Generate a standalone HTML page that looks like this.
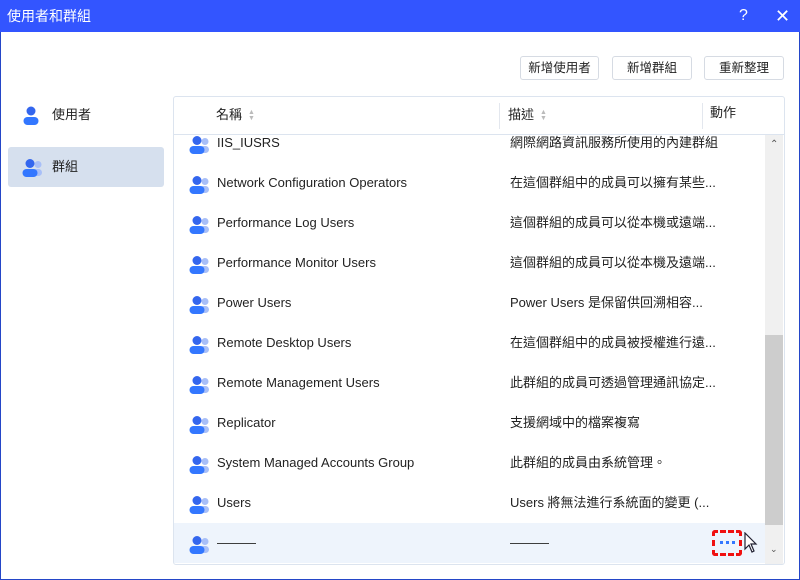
<!DOCTYPE html>
<html><head><meta charset="utf-8"><style>
*{margin:0;padding:0;box-sizing:border-box}
body{width:800px;height:580px;overflow:hidden;background:#fff;font-family:"Liberation Sans","Noto Sans CJK TC",sans-serif;font-size:13px;color:#222;position:relative}
.win{position:absolute;left:0;top:0;width:800px;height:580px;border:1px solid #2446c8;border-top:none}
.title{position:absolute;left:0;top:0;width:800px;height:32px;background:#3355ff;color:#fff;font-size:14px;line-height:32px;padding-left:7px}
.title .q{position:absolute;left:739px;top:0;font-size:16px}
.title .x{position:absolute;left:775px;top:0;font-size:18px}
.btn{position:absolute;top:56px;height:24px;border:1px solid #d6dbe3;border-radius:3px;background:#fff;text-align:center;line-height:22px;font-size:12.5px;white-space:nowrap}
.side{position:absolute;left:8px;width:156px;height:40px;border-radius:3px;line-height:40px;padding-left:44px;font-size:13px}
.side svg{position:absolute;left:14px;top:11px}
.panel{position:absolute;left:173px;top:96px;width:612px;height:469px;border:1px solid #dce4ef;border-radius:3px;overflow:hidden}
.hdr{position:absolute;left:0;top:0;width:610px;height:38px;border-bottom:1px solid #dce4ef;font-size:13px;line-height:36px}
.row{position:absolute;left:0;width:591px;height:40px;line-height:40px;font-size:13px}
.row svg{position:absolute;left:15px;top:12px}
.row .n{position:absolute;left:43px}
.row .d{position:absolute;left:336px}
.sort{display:inline-block;vertical-align:middle;margin-left:6px;color:#bbb;font-size:7px;line-height:6px}
</style></head><body>
<div class="win"></div>
<div class="title">使用者和群組<span class="q">?</span><span class="x">✕</span></div>
<div class="btn" style="left:520px;width:79px">新增使用者</div>
<div class="btn" style="left:612px;width:80px">新增群組</div>
<div class="btn" style="left:704px;width:80px">重新整理</div>
<div class="side" style="top:95px">
<svg width="18" height="20" viewBox="0 0 18 20"><circle cx="9" cy="5" r="4.5" fill="#3366ee"/><rect x="1.5" y="11" width="15" height="8" rx="4" fill="#3377ff"/></svg>使用者</div>
<div class="side" style="top:147px;background:#d6e0ee">
<svg width="22" height="20" viewBox="0 0 22 20"><circle cx="16" cy="6.5" r="3.5" fill="#a8bff8"/><rect x="11" y="11" width="9" height="7" rx="3.5" fill="#a8bff8"/><circle cx="8" cy="5.5" r="4.5" fill="#3366ee"/><rect x="0.5" y="11" width="15" height="8" rx="4" fill="#3377ff"/></svg>群組</div>
<div class="panel">
<div class="hdr"><span style="position:absolute;left:42px">名稱<span class="sort">▲<br>▼</span></span>
<div style="position:absolute;left:325px;top:6px;height:26px;border-left:1px solid #e3e7ee"></div>
<span style="position:absolute;left:334px">描述<span class="sort">▲<br>▼</span></span>
<div style="position:absolute;left:528px;top:6px;height:26px;border-left:1px solid #e3e7ee"></div>
<span style="position:absolute;left:536px;top:-2px">動作</span></div>
<div style="position:absolute;left:591px;top:38px;width:18px;height:429px;background:#f0f0f0"></div>
<div style="position:absolute;left:591px;top:238px;width:18px;height:190px;background:#cdcdcd"></div>
<div style="position:absolute;left:596px;top:42px;font-size:10px;color:#555">⌃</div>
<div style="position:absolute;left:596px;top:447px;font-size:9px;color:#555">⌄</div>
<div id="rows"></div>
</div>
<script>
var d=[["IIS_IUSRS","網際網路資訊服務所使用的內建群組"],["Network Configuration Operators","在這個群組中的成員可以擁有某些..."],["Performance Log Users","這個群組的成員可以從本機或遠端..."],["Performance Monitor Users","這個群組的成員可以從本機及遠端..."],["Power Users","Power Users 是保留供回溯相容..."],["Remote Desktop Users","在這個群組中的成員被授權進行遠..."],["Remote Management Users","此群組的成員可透過管理通訊協定..."],["Replicator","支援網域中的檔案複寫"],["System Managed Accounts Group","此群組的成員由系統管理。"],["Users","Users 將無法進行系統面的變更 (..."],["———","———"]];
var ic='<svg width="22" height="20" viewBox="0 0 22 20"><circle cx="16" cy="6.5" r="3.5" fill="#a8bff8"/><rect x="11" y="11" width="9" height="7" rx="3.5" fill="#a8bff8"/><circle cx="8" cy="5.5" r="4.5" fill="#3366ee"/><rect x="0.5" y="11" width="15" height="8" rx="4" fill="#3377ff"/></svg>';
var h='';d.forEach(function(r,i){var t=26+i*40;h+='<div class="row" style="top:'+t+'px;'+(i==10?'background:#eef4fc;':'')+'">'+ic+'<span class="n">'+r[0]+'</span><span class="d">'+r[1]+'</span></div>';});
document.getElementById('rows').innerHTML=h;
</script>
<div style="position:absolute;left:712px;top:530px;width:30px;height:26px;border:3px dashed #f01010;border-radius:3px"></div>
<div style="position:absolute;left:720px;top:541px;width:3px;height:3px;background:#3377ff;box-shadow:6px 0 #3377ff,12px 0 #3377ff"></div>
<svg style="position:absolute;left:744px;top:532px" width="14" height="22" viewBox="0 0 14 22"><path d="M1 1 L1 17 L5 13 L8 20 L10 19 L7 12 L12 12 Z" fill="#fff" stroke="#223" stroke-width="1.2"/></svg>
</body></html>
